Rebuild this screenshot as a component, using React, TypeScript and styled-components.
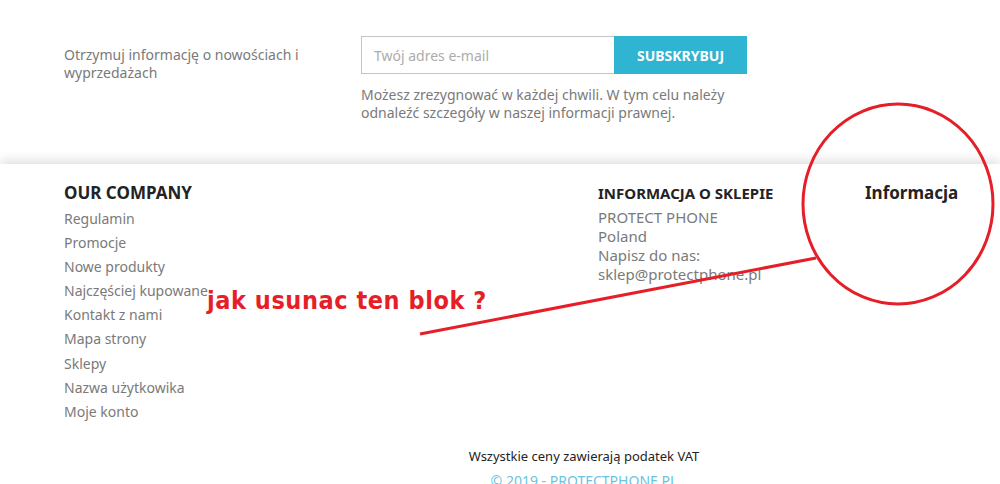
import styled, { createGlobalStyle } from 'styled-components';

const GlobalStyle = createGlobalStyle`
  html, body {
    margin: 0;
    padding: 0;
    background: #fff;
  }
  body {
    font-family: "Noto Sans", "Open Sans", sans-serif;
    color: #7a7a7a;
  }
  * { box-sizing: border-box; }
`;

const companyLinks = [
  'Regulamin',
  'Promocje',
  'Nowe produkty',
  'Najczęściej kupowane',
  'Kontakt z nami',
  'Mapa strony',
  'Sklepy',
  'Nazwa użytkowika',
  'Moje konto',
];

const storeLines = ['PROTECT PHONE', 'Poland', 'Napisz do nas:', 'sklep@protectphone.pl'];

const Page = styled.div`
  position: relative;
  width: 1000px;
  height: 484px;
  overflow: hidden;
`;

const Newsletter = styled.section`
  display: grid;
  grid-template-columns: 297px 386px;
  padding: 36px 0 0 64px;
  height: 164px;
`;

const Lead = styled.p`
  margin: 10px 0 0;
  font-size: 14px;
  line-height: 18px;
  width: 250px;
`;

const FormCol = styled.div`
  display: flex;
  flex-direction: column;
`;

const Form = styled.form`
  display: flex;
  height: 38px;
`;

const EmailInput = styled.input`
  width: 253px;
  height: 38px;
  border: 1px solid #c4c4c4;
  border-right: none;
  padding: 0 12px;
  font-family: inherit;
  font-size: 14px;
  color: #232323;
  outline: none;
  &::placeholder {
    color: #acacac;
  }
`;

const SubscribeButton = styled.button`
  width: 133px;
  height: 38px;
  border: none;
  background: #2fb5d2;
  color: #fff;
  font-family: inherit;
  font-weight: 700;
  font-size: 14px;
  text-transform: uppercase;
  padding: 0;
`;

const Note = styled.p`
  margin: 12px 0 0;
  font-size: 14px;
  line-height: 18px;
`;

const FooterContainer = styled.footer`
  position: relative;
  background: #fff;
  box-shadow: 0 -3px 11px 0 rgba(0, 0, 0, 0.14);
  padding-top: 18px;
`;

const Columns = styled.div`
  display: grid;
  grid-template-columns: 534px 267px 1fr;
  padding-left: 64px;
`;

const BlockTitle = styled.h4<{ $size?: number }>`
  margin: 0;
  color: #232323;
  font-weight: 700;
  font-size: ${(p) => p.$size ?? 17}px;
  line-height: 22px;
  text-transform: uppercase;
`;

const InfoTitle = styled.h4`
  margin: 0;
  color: #232323;
  font-weight: 700;
  font-size: 17px;
  line-height: 22px;
`;

const LinkList = styled.ul`
  list-style: none;
  margin: 3px 0 0;
  padding: 0;
  li {
    font-size: 14px;
    line-height: 24.1px;
    color: #7a7a7a;
  }
`;

const StoreInfo = styled.div`
  margin-top: 4px;
  font-size: 15px;
  line-height: 19px;
`;

const Legal = styled.div`
  padding: 20px 0 0 168px;
  width: 1000px;
  text-align: center;
`;

const VatNote = styled.p`
  margin: 0;
  font-size: 13px;
  line-height: 24px;
  color: #232323;
`;

const Copyright = styled.p`
  margin: 0;
  font-size: 14px;
  line-height: 26px;
  color: #6cc3de;
`;

const Overlay = styled.svg`
  position: absolute;
  left: 0;
  top: 0;
  pointer-events: none;
`;

const Question = styled.div`
  position: absolute;
  left: 207px;
  top: 286px;
  color: #e61e28;
  font-family: "DejaVu Sans Condensed", "DejaVu Sans", sans-serif;
  font-stretch: condensed;
  font-weight: 700;
  font-size: 25px;
  line-height: 30px;
  letter-spacing: 0.55px;
  white-space: nowrap;
`;

export default function App() {
  return (
    <>
      <GlobalStyle />
      <Page>
        <Newsletter>
          <Lead>Otrzymuj informację o nowościach i wyprzedażach</Lead>
          <FormCol>
            <Form onSubmit={(e) => e.preventDefault()}>
              <EmailInput type="text" placeholder="Twój adres e-mail" />
              <SubscribeButton type="submit">Subskrybuj</SubscribeButton>
            </Form>
            <Note>
              Możesz zrezygnować w każdej chwili. W tym celu należy odnaleźć szczegóły w naszej informacji
              prawnej.
            </Note>
          </FormCol>
        </Newsletter>
        <FooterContainer>
          <Columns>
            <div>
              <BlockTitle>Our company</BlockTitle>
              <LinkList>
                {companyLinks.map((l) => (
                  <li key={l}>{l}</li>
                ))}
              </LinkList>
            </div>
            <div>
              <BlockTitle $size={15}>Informacja o sklepie</BlockTitle>
              <StoreInfo>
                {storeLines.map((l) => (
                  <div key={l}>{l}</div>
                ))}
              </StoreInfo>
            </div>
            <InfoTitle>Informacja</InfoTitle>
          </Columns>
          <Legal>
            <VatNote>Wszystkie ceny zawierają podatek VAT</VatNote>
            <Copyright>© 2019 - PROTECTPHONE.PL</Copyright>
          </Legal>
        </FooterContainer>
        <Overlay width="1000" height="484" viewBox="0 0 1000 484">
          <ellipse cx="898" cy="204" rx="95" ry="100" fill="none" stroke="#e61e28" strokeWidth="3" />
          <line x1="420" y1="334" x2="816" y2="258" stroke="#e61e28" strokeWidth="3" />
        </Overlay>
        <Question>jak usunac ten blok ?</Question>
      </Page>
    </>
  );
}
